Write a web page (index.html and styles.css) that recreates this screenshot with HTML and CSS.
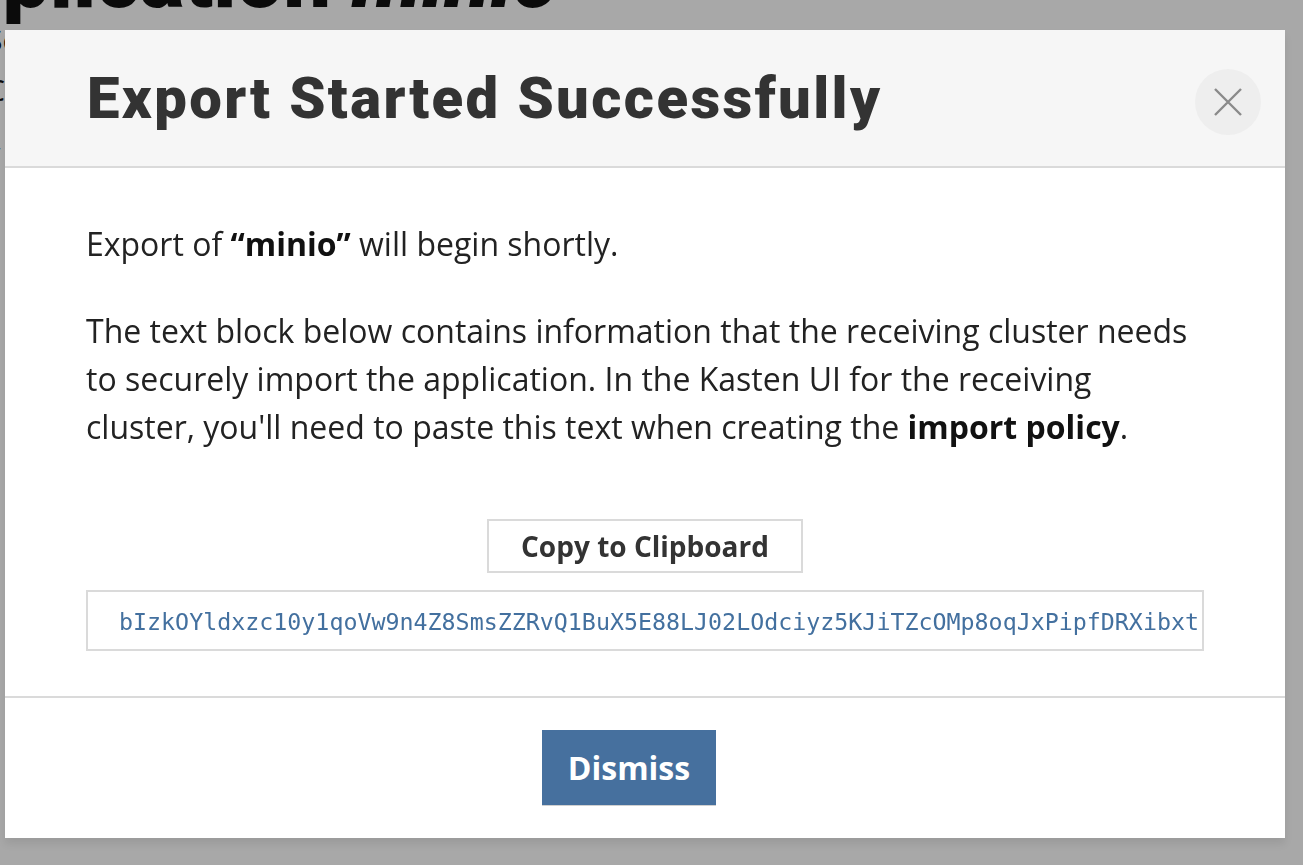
FILE: index.html
```html
<!DOCTYPE html>
<html lang="en">
<head>
<meta charset="utf-8">
<title>Export Started Successfully</title>
<link rel="stylesheet" href="styles.css">
</head>
<body>
<div class="page">
  <h1 class="page-title">Application <em>minio</em></h1>
  <div class="page-side">
    <p class="side-line">Some</p>
    <p class="side-line">Connected</p>
    <p class="side-line big">/</p>
  </div>
</div>
<div class="overlay"></div>
<div class="modal" role="dialog">
  <div class="modal-header">
    <h2 class="modal-title">Export Started Successfully</h2>
    <button class="close-btn" aria-label="Close">
      <svg width="32" height="32" viewBox="0 0 32 32"><path d="M3 3 L29 29 M29 3 L3 29" stroke="#8a8a8a" stroke-width="2.4" fill="none"/></svg>
    </button>
  </div>
  <div class="modal-body">
    <p class="para first">Export of <strong>“minio”</strong> will begin shortly.</p>
    <p class="para">The text block below contains information that the receiving cluster needs to securely import the application. In the Kasten UI for the receiving cluster, you'll need to paste this text when creating the <strong>import policy</strong>.</p>
    <div class="copy-row"><button class="copy-btn">Copy to Clipboard</button></div>
    <div class="code-box">bIzkOYldxzc10y1qoVw9n4Z8SmsZZRvQ1BuX5E88LJ02LOdciyz5KJiTZcOMp8oqJxPipfDRXibxt Qm7aVf3kLs2Wq9eRt</div>
  </div>
  <div class="modal-footer">
    <button class="dismiss-btn">Dismiss</button>
  </div>
</div>
</body>
</html>
```
FILE: styles.css
```css
html, body {
  margin: 0;
  padding: 0;
  height: 100%;
  overflow: hidden;
}
body {
  background: #fff;
  font-family: "Open Sans", "Noto Sans", sans-serif;
  color: #222;
}
.page-title {
  margin: -66px 0 0 -100px;
  font-family: Roboto, sans-serif;
  font-weight: 900;
  font-size: 84px;
  line-height: 90px;
  color: #111;
  white-space: nowrap;
}
.page-title em {
  font-style: italic;
}
.page-side {
  margin-left: -14px;
}
.side-line {
  margin: 0 0 18px;
  font-size: 30px;
  line-height: 32px;
  color: #111;
}
.side-line.big {
  margin-top: 40px;
  font-size: 40px;
}
.overlay {
  position: fixed;
  inset: 0;
  background: rgba(0, 0, 0, 0.34);
}
.modal {
  position: absolute;
  left: 5px;
  top: 30px;
  width: 1280px;
  height: 808px;
  background: #fff;
  display: flex;
  flex-direction: column;
  box-shadow: 0 6px 8px rgba(0, 0, 0, 0.08);
}
.modal-header {
  height: 136px;
  background: #f6f6f6;
  border-bottom: 2px solid #dadada;
  display: flex;
  align-items: center;
  justify-content: space-between;
  padding: 0 24px 0 82px;
}
.modal-title {
  margin: 0;
  font-family: Roboto, sans-serif;
  font-weight: 900;
  font-size: 58px;
  letter-spacing: 2.4px;
  color: #333;
}
.close-btn {
  width: 66px;
  height: 66px;
  border-radius: 50%;
  border: none;
  background: #eeeeee;
  display: flex;
  align-items: center;
  justify-content: center;
  padding: 0;
  margin-top: 8px;
}
.modal-body {
  flex: 1;
  padding: 52px 81px 0;
}
.para {
  margin: 0 0 39px;
  font-size: 32px;
  line-height: 48px;
  color: #222;
}
.para strong {
  font-weight: 700;
  color: #111;
}
.copy-row {
  display: flex;
  justify-content: center;
  margin-top: 68px;
}
.copy-btn {
  height: 54px;
  padding: 0 32px;
  border: 2px solid #dadada;
  background: #fff;
  font-family: "Open Sans", sans-serif;
  font-weight: 700;
  font-size: 28px;
  color: #333;
}
.code-box {
  margin-top: 17px;
  height: 57px;
  border: 2px solid #dadada;
  padding: 0 0 0 31px;
  font-family: "DejaVu Sans Mono", monospace;
  font-size: 23.3px;
  line-height: 60px;
  color: #43709f;
  white-space: nowrap;
  overflow: hidden;
}
.modal-footer {
  height: 140px;
  border-top: 2px solid #dadada;
  display: flex;
  align-items: center;
  justify-content: center;
  padding-right: 32px;
}
.dismiss-btn {
  width: 174px;
  height: 76px;
  border: none;
  border-bottom: 1px solid #d0d0d0;
  background: #46709e;
  color: #fff;
  font-family: "Open Sans", sans-serif;
  font-weight: 700;
  font-size: 32px;
}
```
